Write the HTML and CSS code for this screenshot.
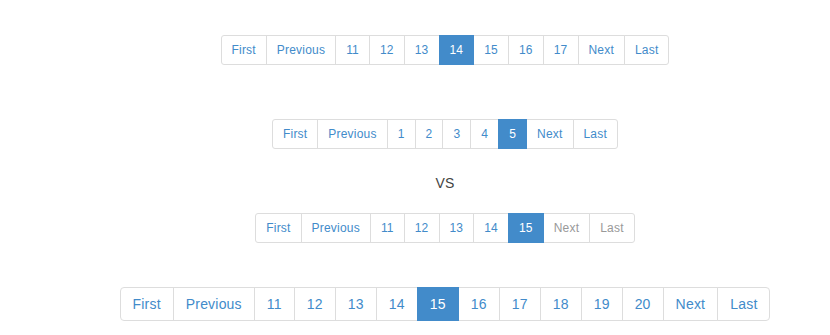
FILE: index.html
```html
<!DOCTYPE html>
<html>
<head>
<meta charset="utf-8">
<link rel="stylesheet" href="styles.css">
</head>
<body>
<div class="wrap">
  <div class="row row1">
    <ul class="pagination sm">
      <li><a>First</a></li>
      <li><a>Previous</a></li>
      <li><a>11</a></li>
      <li><a>12</a></li>
      <li><a>13</a></li>
      <li class="active"><a>14</a></li>
      <li><a>15</a></li>
      <li><a>16</a></li>
      <li><a>17</a></li>
      <li><a>Next</a></li>
      <li><a>Last</a></li>
    </ul>
  </div>
  <div class="row row2">
    <ul class="pagination sm">
      <li><a>First</a></li>
      <li><a>Previous</a></li>
      <li><a>1</a></li>
      <li><a>2</a></li>
      <li><a>3</a></li>
      <li><a>4</a></li>
      <li class="active"><a>5</a></li>
      <li><a>Next</a></li>
      <li><a>Last</a></li>
    </ul>
  </div>
  <div class="vs">VS</div>
  <div class="row row3">
    <ul class="pagination sm">
      <li><a>First</a></li>
      <li><a>Previous</a></li>
      <li><a>11</a></li>
      <li><a>12</a></li>
      <li><a>13</a></li>
      <li><a>14</a></li>
      <li class="active"><a>15</a></li>
      <li class="disabled"><a>Next</a></li>
      <li class="disabled"><a>Last</a></li>
    </ul>
  </div>
  <div class="row row4">
    <ul class="pagination">
      <li><a>First</a></li>
      <li><a>Previous</a></li>
      <li><a>11</a></li>
      <li><a>12</a></li>
      <li><a>13</a></li>
      <li><a>14</a></li>
      <li class="active"><a>15</a></li>
      <li><a>16</a></li>
      <li><a>17</a></li>
      <li><a>18</a></li>
      <li><a>19</a></li>
      <li><a>20</a></li>
      <li><a>Next</a></li>
      <li><a>Last</a></li>
    </ul>
  </div>
</div>
</body>
</html>
```

FILE: styles.css
```css
html, body {
  margin: 0;
  padding: 0;
  background: #fff;
}
body {
  font-family: "Liberation Sans", Arial, Helvetica, sans-serif;
  font-size: 14px;
  line-height: 20px;
  color: #333;
}
.wrap {
  padding-left: 60px;
  text-align: center;
}
.row {
  display: flex;
  justify-content: center;
}
.row1 { margin-top: 35px; }
.row2 { margin-top: 54px; }
.vs {
  margin-top: 24px;
  height: 20px;
  font-size: 14px;
  line-height: 20px;
  color: #444;
  letter-spacing: 0.2px;
}
.row3 { margin-top: 20px; }
.row4 { margin-top: 44px; }

.pagination {
  display: inline-flex;
  list-style: none;
  margin: 0;
  padding: 0;
}
.pagination li a {
  display: block;
  padding: 6px 12px;
  font-size: 14px;
  line-height: 20px;
  letter-spacing: 0.2px;
  color: #428bca;
  background: #fff;
  border: 1px solid #ddd;
  margin-left: -1px;
  text-decoration: none;
}
.pagination li:first-child a {
  margin-left: 0;
  border-radius: 4px 0 0 4px;
}
.pagination li:last-child a {
  border-radius: 0 4px 4px 0;
}
.pagination.sm li a {
  padding: 5px 10px;
  font-size: 12px;
  line-height: 18px;
}
.pagination.sm li:first-child a {
  border-radius: 3px 0 0 3px;
}
.pagination.sm li:last-child a {
  border-radius: 0 3px 3px 0;
}
.pagination li.active a {
  background: #428bca;
  border-color: #428bca;
  color: #fff;
  position: relative;
  z-index: 2;
}
.pagination li.disabled a {
  color: #999;
}
```
